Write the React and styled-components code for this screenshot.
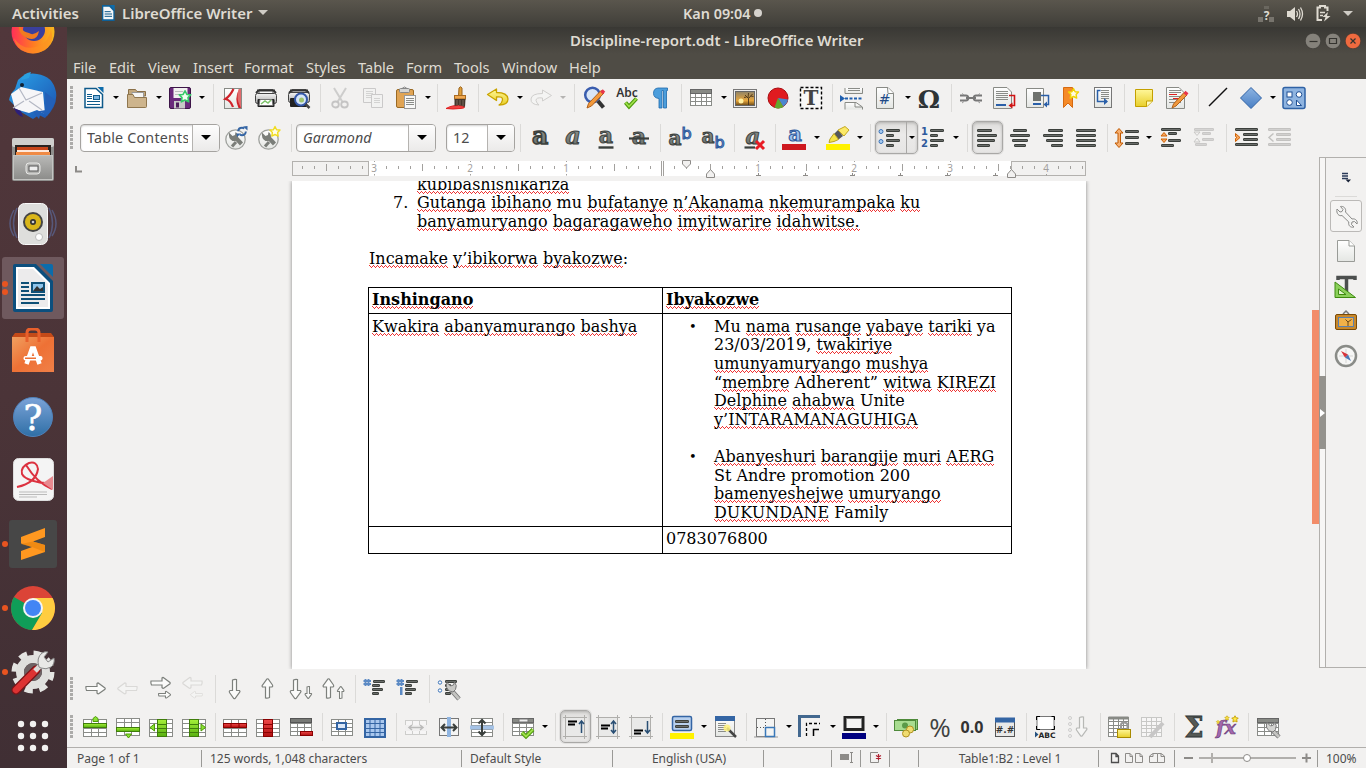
import React from "react";
import styled, { createGlobalStyle, css } from "styled-components";

const GlobalStyle = createGlobalStyle`
  * { box-sizing: border-box; }
  body { margin: 0; overflow: hidden; background: #f2f1f0; }
`;

const uiFont = `"Noto Sans", "Open Sans", sans-serif`;

/* ---------- shell ---------- */

const Screen = styled.div`
  width: 1366px;
  height: 768px;
  display: flex;
  flex-direction: column;
  overflow: hidden;
  font-family: ${uiFont};
  color: #4c4c4c;
`;

const TopBar = styled.header`
  height: 27px;
  flex: none;
  display: grid;
  grid-template-columns: 1fr auto 1fr;
  align-items: center;
  background: linear-gradient(#5a564d, #45433d 80%, #3f3e39);
  color: #dfdbd2;
  font-size: 15px;
  font-weight: 600;
`;

const TopLeft = styled.div`
  display: flex;
  align-items: center;
  padding: 0 0 2px 12px;
`;

const TopLabel = styled.span`
  width: ${(p) => p.$w}px;
  padding-left: ${(p) => p.$pl || 0}px;
  white-space: nowrap;
`;

const TopRight = styled.div`
  display: flex;
  align-items: center;
  justify-content: flex-end;
  gap: 12px;
  padding-right: 13px;
`;

const Clock = styled.div`
  display: flex;
  align-items: center;
  gap: 4px;
  padding: 0 0 1px 79px;
  width: 158px;
  font-size: 14.4px;
`;

const Dot = styled.i`
  width: 8px;
  height: 8px;
  border-radius: 50%;
  background: #d6d3ce;
`;

const Desktop = styled.div`
  flex: 1;
  min-height: 0;
  display: flex;
`;

const Dock = styled.nav`
  width: 67px;
  flex: none;
  overflow: hidden;
  background: linear-gradient(#51373b, #4b3438 50%, #402f34);
`;

const DockList = styled.div`
  margin-top: -27px;
  display: flex;
  flex-direction: column;
`;

const DockItem = styled.div`
  position: relative;
  height: 64px;
  display: flex;
  align-items: center;
  padding-left: 9px;
  ${(p) =>
    p.$active &&
    css`
      &::before {
        content: "";
        position: absolute;
        left: 2px;
        top: 1px;
        width: 62px;
        height: 62px;
        border-radius: 3px;
        background: #6f595e;
      }
    `}
  svg { position: relative; }
`;

const RunDots = styled.span`
  position: absolute;
  left: 2px;
  top: 50%;
  transform: translateY(-50%);
  display: flex;
  flex-direction: column;
  gap: 2px;
  i {
    width: 6px;
    height: 6px;
    border-radius: 50%;
    background: #e95420;
  }
`;

const Window = styled.main`
  flex: 1;
  min-width: 0;
  display: flex;
  flex-direction: column;
  background: #f2f1f0;
`;

const TitleBar = styled.div`
  height: 27px;
  flex: none;
  display: grid;
  grid-template-columns: 1fr auto 1fr;
  align-items: center;
  background: linear-gradient(#393834, #4f4c45);
  color: #dfdbd2;
  font-size: 15px;
  font-weight: 600;
  padding: 0 5px;
`;

const Title = styled.span`
  grid-column: 2;
  white-space: nowrap;
  width: 293px;
  padding-bottom: 2px;
`;

const WinButtons = styled.div`
  display: flex;
  justify-content: flex-end;
  gap: 4px;
`;

const MenuBar = styled.div`
  height: 25px;
  flex: none;
  display: flex;
  align-items: center;
  padding: 1px 0 0 6px;
  background: #4f4c45;
  color: #dfdbd2;
  font-size: 14.6px;
`;

const MenuItem = styled.span`
  width: ${(p) => p.$w}px;
  flex: none;
  white-space: nowrap;
`;

/* ---------- toolbars ---------- */

const ToolBar = styled.div`
  height: 39px;
  flex: none;
  display: flex;
  align-items: center;
  padding-left: 3px;
  padding-bottom: ${(p) => p.$pb || 0}px;
`;

const Handle = styled.i`
  width: 3px;
  height: 23px;
  flex: none;
  margin-right: ${(p) => p.$gap}px;
  background: repeating-linear-gradient(#acaba9 0 3px, transparent 3px 4px);
`;

const pressed = css`
  border: 1px solid #a9a8a6;
  border-radius: 5px;
  background: linear-gradient(#dddcda, #ebeae9 40%, #e6e5e4);
  box-shadow: inset 0 1px 3px rgba(0, 0, 0, 0.2), 0 0 0 1px #e2e1e0;
`;

const Tool = styled.span`
  width: 33px;
  height: 34px;
  flex: none;
  display: flex;
  align-items: center;
  padding-left: 4px;
  svg { display: block; overflow: visible; }
  ${(p) =>
    p.$on &&
    css`
      ${pressed}
      width: 31px;
      height: 33px;
      padding-left: 2px;
      margin: 0 1px;
    `}
`;

const Arrow = styled.span`
  width: ${(p) => (p.$wide ? 11 : 10)}px;
  height: 33px;
  flex: none;
  display: flex;
  align-items: center;
  justify-content: center;
  &::before {
    content: "";
    border: 3px solid transparent;
    border-top-color: ${(p) => (p.$off ? "#b5b4b2" : "#000")};
    border-bottom: 0;
  }
`;

const SplitPressed = styled.span`
  ${pressed}
  display: flex;
  align-items: center;
  width: 43px;
  height: 33px;
  flex: none;
  margin-left: 1px;
  ${Tool} {
    padding-left: 2px;
    width: 31px;
    height: 31px;
    border-right: 1px solid #a9a8a6;
  }
`;

const Sep = styled.i`
  width: 1px;
  height: 28px;
  flex: none;
  margin: 0 3px 0 ${(p) => 4 + (p.$x || 0)}px;
  background: #dbdad8;
`;

const Combo = styled.div`
  width: ${(p) => p.$w}px;
  height: 28px;
  flex: none;
  display: flex;
  margin-left: ${(p) => p.$ml || 0}px;
  border: 1px solid #a5a3a0;
  border-radius: 4px;
  overflow: hidden;
  background: #fff;
  box-shadow: inset 0 1px 2px rgba(0, 0, 0, 0.18);
  font-size: 14.3px;
`;

const ComboText = styled.span`
  flex: 1;
  min-width: 0;
  margin: 0 4px 0 6px;
  line-height: 26px;
  overflow: hidden;
  white-space: nowrap;
  font-style: ${(p) => (p.$italic ? "italic" : "normal")};
  letter-spacing: ${(p) => p.$ls || 0}px;
`;

const ComboButton = styled.span`
  width: 27px;
  border-left: 1px solid #b5b3b0;
  background: linear-gradient(#fdfdfd, #ebeae9);
  display: flex;
  align-items: center;
  justify-content: center;
  &::before {
    content: "";
    border: 5px solid transparent;
    border-top-color: #000;
    border-bottom: 0;
  }
`;

/* ---------- work area ---------- */

const WorkArea = styled.div`
  height: 512px;
  flex: none;
  display: flex;
`;

const EditColumn = styled.div`
  width: 1245px;
  flex: none;
  display: flex;
  flex-direction: column;
`;

const RulerRow = styled.div`
  height: 24px;
  flex: none;
  svg { display: block; }
`;

const Canvas = styled.div`
  flex: 1;
  min-height: 0;
  overflow: hidden;
  padding-left: 225px;
`;

const Page = styled.article`
  width: 794px;
  height: 488px;
  background: #fff;
  box-shadow: 0 0 4px rgba(0, 0, 0, 0.45);
  font-family: "DejaVu Serif", serif;
  font-size: 16px;
  line-height: 18.63px;
  color: #000;
  padding-left: 76px;
  overflow: hidden;
  clip-path: inset(0 -6px);
`;

const Line = styled.div`
  white-space: nowrap;
  padding-left: ${(p) => p.$indent || 0}px;
  margin-top: ${(p) => p.$mt || 0}px;
  min-height: 18.63px;
`;

const ListLine = styled(Line)`
  display: flex;
  padding-left: 25px;
`;

const Marker = styled.span`
  width: ${(p) => p.$w}px;
  flex: none;
`;

const Misspelt = styled.span`
  background-image: linear-gradient(90deg, #e33 1px, transparent 1px),
    linear-gradient(90deg, transparent 1px, #e33 1px),
    linear-gradient(90deg, transparent 2px, #e33 2px, #e33 3px, transparent 3px);
  background-size: 4px 1px, 2px 1px, 4px 1px;
  background-position: 0 16px, 0 17px, 0 18px;
  background-repeat: repeat-x;
`;

const Table = styled.div`
  display: grid;
  grid-template-columns: 294px 349px;
  grid-template-rows: 26px 213px 27px;
  width: 644px;
  margin-top: 18px;
  border-top: 1px solid #000;
  border-left: 1px solid #000;
`;

const Cell = styled.div`
  border-right: 1px solid #000;
  border-bottom: 1px solid #000;
  padding: ${(p) => p.$pt || 3}px 0 0 3px;
  font-weight: ${(p) => (p.$head ? "bold" : "normal")};
`;

const BulletList = styled.div`
  display: grid;
  grid-template-columns: 24px 1fr;
  padding-left: 24px;
  & + & { margin-top: 18.6px; }
`;

const Bullet = styled.span`
  font-size: 13px;
  margin-left: -1px;
`;

const ScrollGutter = styled.div`
  width: 7px;
  flex: none;
  padding-top: 153px;
`;

const ScrollThumb = styled.div`
  height: 214px;
  background: #f28c69;
`;

const Splitter = styled.div`
  width: 7px;
  height: 511px;
  flex: none;
  border: 1px solid #b2b0ad;
  padding-top: 218px;
  background: #f7f6f5;
`;

const Collapser = styled.div`
  width: 7px;
  height: 73px;
  margin-left: -1px;
  background: #94928d;
  display: flex;
  align-items: center;
  justify-content: center;
  &::before {
    content: "";
    border: 4px solid transparent;
    border-left: 5px solid #fff;
    border-right: 0;
  }
`;

const SideBar = styled.aside`
  flex: 1;
  height: 511px;
  border-top: 1px solid #b2b0ad;
  border-bottom: 1px solid #b2b0ad;
  display: flex;
  flex-direction: column;
  align-items: center;
  padding-top: 8px;
  svg { display: block; overflow: visible; }
`;

const SideRule = styled.i`
  width: 22px;
  height: 1px;
  margin: 6px 0 3px;
  background: #dbdad8;
`;

const SideItem = styled.div`
  width: 32px;
  height: ${(p) => p.$h || 35}px;
  display: flex;
  align-items: center;
  justify-content: center;
  ${(p) =>
    p.$on &&
    css`
      border: 1px solid #bbb9b7;
      border-radius: 3px;
      background: #f5f4f3;
    `}
`;

/* ---------- status bar ---------- */

const StatusBar = styled.footer`
  height: 21px;
  flex: none;
  display: flex;
  align-items: center;
  border-top: 1px solid #b1afac;
  font-size: 12px;
  margin-top: auto;
`;

const Status = styled.span`
  width: ${(p) => p.$w}px;
  height: 17px;
  flex: none;
  display: flex;
  align-items: center;
  justify-content: ${(p) => (p.$center ? "center" : "flex-start")};
  padding-left: ${(p) => p.$pl || 0}px;
  border-right: ${(p) => (p.$last ? "0" : "1px solid #9a9996")};
  white-space: nowrap;
`;

/* ---------- icon helpers ---------- */

const Icon = ({ children, size = 24, box = 24 }) => (
  <svg width={size} height={size} viewBox={`0 0 ${box} ${box}`} fill="none">
    {children}
  </svg>
);
const P = ({ d, s = "#444", w = 1, f = "none", ...r }) => (
  <path d={d} stroke={s} strokeWidth={w} fill={f} {...r} />
);
const R = ({ x, y, w, h, f = "none", s = "none", ...r }) => (
  <rect x={x} y={y} width={w} height={h} fill={f} stroke={s} {...r} />
);
const T = ({ x = 12, y = 18, size = 20, f = "#4c4f4c", family = "DejaVu Serif", children, ...r }) => (
  <text x={x} y={y} fontSize={size} fill={f} fontFamily={family} textAnchor="middle" {...r}>
    {children}
  </text>
);

const HiddenSvg = styled.svg`
  position: absolute;
`;

const Defs = () => (
  <HiddenSvg width="0" height="0">
    <defs>
      <linearGradient id="paper" x2="0" y2="1">
        <stop stopColor="#fff" /><stop offset="1" stopColor="#e4e6e3" />
      </linearGradient>
      <linearGradient id="steel" x2="0" y2="1">
        <stop stopColor="#f4f4f4" /><stop offset="1" stopColor="#a9a9a9" />
      </linearGradient>
      <linearGradient id="cabinet" x2="0" y2="1">
        <stop stopColor="#b9b9b7" /><stop offset="1" stopColor="#8c8c8a" />
      </linearGradient>
      <linearGradient id="letter" x2="0" y2="1">
        <stop stopColor="#9a9f9a" /><stop offset="1" stopColor="#646a66" />
      </linearGradient>
      <linearGradient id="blue" x2="0" y2="1">
        <stop stopColor="#8db4e2" /><stop offset="1" stopColor="#4a7fc4" />
      </linearGradient>
      <linearGradient id="gold" x2="0" y2="1">
        <stop stopColor="#fff79a" /><stop offset="1" stopColor="#e8cf2a" />
      </linearGradient>
      <linearGradient id="help" x2="0" y2="1">
        <stop stopColor="#7ba3d8" /><stop offset="1" stopColor="#2f6fa6" />
      </linearGradient>
      <linearGradient id="bag" x2="1" y2="1">
        <stop stopColor="#f0a060" /><stop offset=".5" stopColor="#ee7135" /><stop offset="1" stopColor="#f08048" />
      </linearGradient>
      <linearGradient id="fox" x2="1" y2="0">
        <stop stopColor="#ff2f58" /><stop offset=".5" stopColor="#ff7a22" /><stop offset="1" stopColor="#f8b81e" />
      </linearGradient>
      <linearGradient id="bird" x2="1" y2="1">
        <stop stopColor="#2aa3e8" /><stop offset="1" stopColor="#1b4fae" />
      </linearGradient>
      <linearGradient id="sunset" x2="0" y2="1">
        <stop stopColor="#8f8468" /><stop offset=".65" stopColor="#e8a63c" /><stop offset="1" stopColor="#6a4a18" />
      </linearGradient>
      <linearGradient id="redr" x2="0" y2="1">
        <stop stopColor="#ef4848" /><stop offset="1" stopColor="#b01010" />
      </linearGradient>
      <linearGradient id="greenr" x2="0" y2="1">
        <stop stopColor="#a6f03a" /><stop offset="1" stopColor="#58b010" />
      </linearGradient>
    </defs>
  </HiddenSvg>
);

const Bars = ({ rows, s = "#3c403c" }) =>
  rows.map(([x1, x2, y], i) => (
    <g key={i}>
      <R x={x1} y={y} w={x2 - x1} h={3} f={s} rx="1.2" />
      <R x={x1 + 1} y={y + 1} w={Math.max(1, x2 - x1 - 2)} h={0.8} f="#fff" opacity=".3" />
    </g>
  ));

const Grid = ({ x = 0.5, y = 4.5, w = 23, h = 17, cols = 3, rows = 4, s = "#8a8c88", f = "#fff" }) => {
  const lines = [];
  for (let i = 1; i < cols; i++) lines.push(`M${x + Math.round((w * i) / cols)} ${y}v${h}`);
  for (let i = 1; i < rows; i++) lines.push(`M${x} ${y + Math.round((h * i) / rows)}h${w}`);
  return (
    <g>
      <R x={x} y={y} w={w} h={h} f={f} s={s} />
      <P d={lines.join("")} s={s} />
    </g>
  );
};

const Star = ({ x, y, c = "#f4d800", f = "#fff8b0", k = 1 }) => (
  <path
    transform={`translate(${x} ${y}) scale(${k})`}
    d="M0-5L1.6-1.8L5-1.5L2.6 1L3.2 4.6L0 3L-3.2 4.6L-2.6 1L-5-1.5L-1.6-1.8Z"
    fill={f}
    stroke={c}
    strokeWidth="1.4"
    strokeLinejoin="round"
  />
);

const Wrench = ({ s = "#777", f = "#e8e8e6", t }) => (
  <path
    transform={t}
    d="M2 4L5 7L7 6.500L8 4.500L5.500 1.500C8.500 .8 11.500 3.500 10.500 7L17 14C20.500 13.200 23 16 22 19L19.500 16.500L17 17L16.500 19.500L19 22C15.500 23 13 20.500 13.800 17L7 10.500C4 11.500 1 8.500 2 4Z"
    fill={f}
    stroke={s}
    strokeLinejoin="round"
  />
);

/* Wrench on the style buttons: jaws at the upper left, handle running to the lower right */
const StyleWrench = () => (
  <g>
    <P d="M11.500 11.500L17.500 18" s="#7b7e79" w={4.200} />
    <path d="M5 6.500L8.500 10L11 9L11.500 6Q15 8.500 13.500 12.500L11.500 15L8.500 15Q4 12.500 5 6.500Z" fill="#7b7e79" />
    <P d="M12 16L8 20.500" s="#7b7e79" w={3} />
  </g>
);

const Lines = ({ y = [8, 10, 12, 14, 16, 18], x = 6, w = 11, s = "#8a8c88" }) => (
  <P d={y.map((v) => `M${x} ${v + 0.5}h${w}`).join("")} s={s} />
);

const Doc = ({ f = "url(#paper)", s = "#888a85" }) => (
  <g>
    <P d="M3.500 1.500H15L20.500 7V22.500H3.500Z" s={s} f={f} />
    <P d="M14.500 1.500L15 7.500H20.500" s={s} f="#fff" />
  </g>
);

const Letter = ({ size = 22, children = "a", ...r }) => (
  <T size={size} fontWeight="bold" f="url(#letter)" stroke="#3c413e" strokeWidth="1" {...r}>{children}</T>
);

/* ---------- toolbar icons ---------- */

const WriterGlyph = () => (
  <g>
    <P d="M3 2.500H14L20.500 8.500V21.500H3Z" s="#0e5a8a" w={1.500} f="#fff" />
    <path d="M15.500 1H21.500V7Z" fill="#0e6cab" />
    <Lines y={[8, 10]} x={5} w={5} s="#0e5a8a" />
    <R x={11.500} y={9.500} w={6} h={4} f="#7ab4e0" s="#0e5a8a" />
    <Lines y={[12]} x={5} w={5} s="#0e5a8a" />
    <Lines y={[15, 18]} x={5} w={13} s="#0e5a8a" />
  </g>
);

const SmallWriterGlyph = () => (
  <g>
    <path d="M3 0H16L22 6V24H3Z" fill="#0e6098" />
    <path d="M5 2.500H14L20 9V21.500H5Z" fill="#f4f6f8" />
    <path d="M15 0H22V8Z" fill="#0e6cab" />
    <P d="M7 10H16M7 13.500H18M7 17H18" s="#0e5a8a" w={1.500} />
  </g>
);

const arrowRight = "M1 10.500H12V7.500Q13 6.500 14 7.500L20 12Q20.500 12.500 20 13.200L14 17.500Q13 18.200 12 17V14.500H1.500Q.5 12.500 1 10.500Z";
const BigArrow = ({ t, off, s }) => (
  <path
    transform={t}
    d={arrowRight}
    fill={off ? "#f4f4f3" : "#fbfbfa"}
    stroke={off ? "#dad9d7" : "#7d807c"}
    strokeWidth={s || 1.2}
  />
);

const I = {
  newDoc: <WriterGlyph />,
  open: (
    <g>
      <P d="M3.500 5V3.500H10.500L12 5.500H20.500V10H3.500Z" s="#8a7048" f="#c2a87e" />
      <P d="M7 6.500H18.500V12H7Z" s="#999" f="#f6f6f4" />
      <P d="M2.500 21.500V8.500H8L9.500 11.500H21.500V20.500Q21.500 21.500 20.500 21.500Z" s="#8f764e" f="#cdb48c" />
    </g>
  ),
  save: (
    <g>
      <R x={1.500} y={1.500} w={21} h={21} rx="1.500" f="#6a2a7c" s="#3d1548" />
      <R x={5.500} y={2} w={14} h={10} f="#f1f1ef" />
      <Lines y={[5, 8]} x={7} w={8} s="#bbb" />
      <R x={6} y={15} w={11} h={7.500} f="#c8c8c8" />
      <R x={8} y={16.500} w={3} h={5} f="#4d1c5c" />
      <Star x={17} y={10.500} c="#37c86a" f="#f2fff2" k={1.150} />
    </g>
  ),
  pdf: (
    <g>
      <R x={3.500} y={2.500} w={17} h={20} f="url(#paper)" s="#888a85" />
      <P d="M12.500 3Q9 10 4.500 13Q9.500 14 12 21" s="#d0222a" w={2.200} />
      <path d="M15 3H20V22H17.500Q13 13 18 3Z" fill="#d0222a" />
      <path d="M17.500 3H20V22Q14.500 13 17.500 3Z" fill="#e88a8a" opacity=".7" />
    </g>
  ),
  print: (
    <g>
      <P d="M5 3.500H19V9H5Z" s="#555" f="#fafafa" />
      <R x={1.500} y={7.500} w={21} h={10} rx="2" f="url(#steel)" s="#444" />
      <P d="M2 7L5 4M22 7L19 4M3 4.500H21" s="#333" w={2} />
      <R x={3.500} y={13} w={17} h={8} rx="1" f="#222" />
      <P d="M6 13.500H18L19 19.500H5Z" s="#777" f="#fff" />
      <P d="M7 18L11 15L14 17L17 14" s="#7dc36a" w={1.500} />
    </g>
  ),
  preview: (
    <g>
      <P d="M5 3.500H19V9H5Z" s="#555" f="#fafafa" />
      <R x={1.500} y={6.500} w={21} h={10} rx="2" f="url(#steel)" s="#444" />
      <P d="M2 7L5 4M22 7L19 4M3 4.500H21" s="#333" w={2} />
      <R x={3} y={12} w={17} h={9} rx="1" f="#222" />
      <circle cx="14" cy="13.500" r="6" fill="#d6e6f8" stroke="#3558a8" strokeWidth="2" />
      <circle cx="14.500" cy="14" r="2.500" fill="#9fc46e" />
      <P d="M18.500 18L22.500 22" s="#444" w={2.500} />
    </g>
  ),
  cut: (
    <g opacity=".5">
      <P d="M6 2L14.500 16M18 2L9.500 16" s="#aaa" w={2} />
      <ellipse cx="7.500" cy="18.500" rx="3.300" ry="3" stroke="#999" strokeWidth="1.800" />
      <ellipse cx="16.500" cy="18.500" rx="3.300" ry="3" stroke="#999" strokeWidth="1.800" />
    </g>
  ),
  copy: (
    <g opacity=".55">
      <P d="M2.500 2.500H14.500V16.500H2.500Z" s="#aaa" f="#f3f3f2" />
      <Lines y={[5, 7, 9, 11]} x={5} w={7} s="#bbb" />
      <P d="M10.500 8.500H21.500V21.500H10.500Z" s="#aaa" f="#f3f3f2" />
      <Lines y={[12, 14, 16]} x={13} w={6} s="#bbb" />
    </g>
  ),
  paste: (
    <g>
      <R x={2.500} y={3.500} w={17} h={18} rx="1.500" f="#e0a454" s="#9a6a24" />
      <R x={5.500} y={2.500} w={10} h={4} rx="1" f="#d6d6d4" s="#888" />
      <P d="M8 2.500Q10.500 -.5 13 2.500" s="#888" />
      <R x={10.500} y={9.500} w={11} h={13} f="#f8f8f7" s="#999" />
      <Lines y={[12, 14, 16, 18]} x={12} w={8} />
    </g>
  ),
  brush: (
    <g>
      <P d="M1 22.500Q9 18 18 20Q22 22 15 22.500Q8 23.500 1 22.500Z" s="#e02020" f="#f04040" />
      <path d="M14 2Q15.500 -.5 17 2L17 10H13.500Z" fill="#e2a03a" stroke="#9a6520" />
      <R x={9.500} y={9.500} w={11} h={3.500} f="#f0a850" s="#a86a20" />
      <path d="M9.500 13H20.500L20 21Q14 18 9.500 20Z" fill="#45362c" />
      <P d="M12 14V19M15 14V19M18 14V20" s="#7c6a5c" />
    </g>
  ),
  undo: <P d="M10.500 3L1.500 8.500L10.500 14.500V11Q17 10 16.500 14Q16 17 13 19Q22 19 22 13Q21.500 6.500 10.500 6.500Z" s="#c9a400" w={1.300} f="url(#gold)" strokeLinejoin="round" />,
  redo: <P d="M13.500 4L22.500 9.500L13.500 15V12Q7 11 7 14.500Q7.500 17 10 19Q1.500 18.500 2 13Q2.500 7.500 13.500 7.500Z" s="#d0cfcd" f="#f4f4f3" strokeLinejoin="round" />,
  find: (
    <g>
      <circle cx="10.500" cy="9" r="7.300" fill="#d9e6f6" stroke="#3a5dae" strokeWidth="2.500" />
      <P d="M16 15L21.500 21.500" s="#333" w={4} />
      <P d="M5 22L6.500 17.500L19 4.500L22 7L9.500 20Z" s="#b0601a" f="#f39a3c" />
      <P d="M19.500 4.500L22 7" s="#e8344c" w={3.500} />
    </g>
  ),
  abc: (
    <g>
      <T y={10.500} size={12} f="#333" family="Noto Sans" fontWeight="600">Abc</T>
      <P d="M10.500 16.500L14 20.500L21.500 12.500" s="#4d9a0c" w={4} />
      <P d="M10.500 16.500L14 20.500L21.500 12.500" s="#9fe04a" w={1.800} />
    </g>
  ),
  pilcrow: (
    <path d="M10 2H19.500V4.500H18.500V22H15.500V4.500H14V22H11V12.500Q5.500 12 5.500 7.300Q5.500 2.500 10 2Z" fill="#4c9edc" stroke="#1e6aac" strokeWidth=".8" />
  ),
  table: (
    <g>
      <Grid x={1.500} y={3.500} w={21} h={16} cols={4} rows={4} />
      <R x={1.500} y={3.500} w={21} h={4} f="#888a85" s="#666" />
    </g>
  ),
  image: (
    <g>
      <R x={0.500} y={3.500} w={23} h={18} f="#eee" s="#777" />
      <R x={2.500} y={5.500} w={19} h={14} f="url(#sunset)" s="#666" />
      <circle cx="8" cy="15" r="2.500" fill="#fff0a0" />
      <P d="M15.500 19V12.500L12 9M15.500 12.500L19.500 8M13.500 11L11 11.500M17.500 10L20.500 10.500M15 12L15.500 7" s="#4a3418" w={0.900} />
    </g>
  ),
  chart: (
    <g>
      <circle cx="12" cy="12" r="10" fill="#e01b20" stroke="#a80c10" />
      <path d="M12 12L22 13.500A10 10 0 0 1 17 20.500Z" fill="#4a86cf" />
      <path d="M12 12L17.500 21A10 10 0 0 1 8.500 21.500Z" fill="#63a82e" />
    </g>
  ),
  textbox: (
    <g>
      <R x={1.500} y={1.500} w={21} h={21} f="#f8f8f7" s="#000" strokeWidth="1.400" strokeDasharray="3 2" />
      <T y={19} size={20} fontWeight="bold" f="#444">T</T>
    </g>
  ),
  pageBreak: (
    <g>
      <P d="M5 2V7.500H22.500V2" s="#888a85" f="url(#paper)" />
      <Lines y={[2, 4]} x={8} w={12} />
      <P d="M5 23.500V16.500H16L22.500 21V23.500" s="#888a85" f="url(#paper)" />
      <P d="M15 17V21H22" s="#888a85" />
      <P d="M5 12.500H23" s="#1f5fae" w={2} strokeDasharray="3 1.500" />
      <path d="M0 9L5 12.500L0 16Z" fill="#1f5fae" />
    </g>
  ),
  field: (
    <g>
      <Doc />
      <T x={11.500} y={18} size={14} f="#204a87" family="DejaVu Sans">#</T>
    </g>
  ),
  omega: <T y={21.500} x={12} size={25} f="#2e3436" fontWeight="bold">Ω</T>,
  link: (
    <g>
      <P d="M1 9.500H7Q9 9.500 9.500 12Q9 14.500 7 14.500H1M23 9.500H17Q15 9.500 14.500 12Q15 14.500 17 14.500H23" s="#777" w={1.800} />
      <P d="M7 12H17" s="#777" w={2} />
      <P d="M3 7.500L5 9M21 7.500L19 9M3 17L5 15.500M21 17L19 15.500" s="#999" />
    </g>
  ),
  footnote: (
    <g>
      <P d="M1.500 1.500H15L19.500 6V22.500H1.500Z" s="#888a85" f="url(#paper)" />
      <Lines y={[5, 7, 9, 11, 13]} x={4} w={12} />
      <Lines y={[18, 19]} x={4} w={10} s="#2a5fa8" />
      <P d="M17 9.500H22.500V19.500H18" s="#d01414" w={1.600} />
      <path d="M20.500 16.500L16.500 19.500L20.500 22.500Z" fill="#d01414" />
    </g>
  ),
  endnote: (
    <g>
      <P d="M1.500 2.500H18.500V21.500H1.500Z" s="#888a85" f="url(#paper)" />
      <R x={8} y={6} w={8} h={9} f="#6f726e" />
      <R x={8} y={17} w={8} h={2} f="#2a5fa8" />
      <P d="M16 9.500H23.500V18.500H20" s="#2a5fa8" w={1.500} />
      <path d="M22 15.500L18.500 18.500L22 21.500Z" fill="#2a5fa8" />
    </g>
  ),
  bookmark: (
    <g>
      <P d="M5.500 1.500H14.500V21.500L10 17L5.500 21.500Z" s="#d66a10" f="#f58a28" />
      <Star x={15.500} y={7.500} c="#f2d400" f="#fffbe0" />
    </g>
  ),
  crossRef: (
    <g>
      <R x={3.500} y={1.500} w={17} h={20} f="url(#paper)" s="#777" />
      <Lines y={[4, 6, 8, 10, 12]} x={10} w={8} />
      <P d="M9.500 4.500H6.500V15.500H16" s="#2a5fa8" w={1.500} />
      <path d="M13 12L17 15.500L13 19Z" fill="#2a5fa8" />
    </g>
  ),
  comment: (
    <g>
      <P d="M3.500 3.500H20.500V15L15 20.500H3.500Z" s="#c4a000" f="url(#gold)" />
      <P d="M14.500 20.500V15H20.500" s="#c4a000" f="#fffbc0" />
    </g>
  ),
  track: (
    <g>
      <P d="M1.500 1.500H14L19.500 7V22.500H1.500Z" s="#888a85" f="url(#paper)" />
      <Lines y={[4, 6, 10, 13, 16]} x={4} w={12} />
      <P d="M4 8.500H12M8 12.500H15" s="#e02020" />
      <P d="M7 22L8.500 18L19 6.500L22 9L11 20Z" s="#b0601a" f="#f0983c" />
      <P d="M19.500 6L22.500 8.500" s="#e8344c" w={3} />
    </g>
  ),
  line: <P d="M3 20L21 2" s="#111" w={1.400} />,
  diamond: <P d="M12 1.500L22.500 12L12 22.500L1.500 12Z" s="#2f62a5" f="url(#blue)" strokeLinejoin="round" />,
  drawFn: (
    <g>
      <R x={1} y={1.500} w={22} h={21} rx="2" f="#8fb4e0" s="#2f62a5" strokeWidth="1.500" />
      <R x={5} y={6} w={5} h={5} s="#1f4f94" f="#fff" />
      <circle cx="17" cy="8.500" r="2.800" fill="#fff" stroke="#1f4f94" />
      <circle cx="7.500" cy="16.500" r="2.800" fill="#fff" stroke="#1f4f94" />
      <P d="M14.500 14L19.500 19.500H14.500Z" s="#1f4f94" f="#fff" />
    </g>
  ),
  styleUpdate: (
    <g>
      <circle cx="11.500" cy="13.500" r="9.700" fill="url(#paper)" stroke="#9fa19d" strokeWidth="1.300" />
      <StyleWrench />
      <circle cx="18" cy="5.500" r="3.800" stroke="#3465a4" strokeWidth="2" strokeDasharray="8 3.900" />
      <path d="M19 .5L23.500 0V4.500ZM12.500 7.500H17L13 11Z" fill="#3465a4" />
    </g>
  ),
  styleNew: (
    <g>
      <circle cx="11.500" cy="13.500" r="9.700" fill="url(#paper)" stroke="#9fa19d" strokeWidth="1.300" />
      <StyleWrench />
      <Star x={18} y={5.500} c="#f0dc20" f="#fffde8" />
    </g>
  ),
  bold: <Letter y={18} size={25} strokeWidth="1.600" />,
  italic: <Letter y={18} size={24} fontStyle="italic" />,
  underline: (
    <g>
      <Letter y={16.500} size={22} />
      <P d="M4.500 21.500H19.500" s="#3a3f3c" w={2.400} />
    </g>
  ),
  strike: (
    <g>
      <Letter y={18} size={22} />
      <P d="M2 12.500H22" s="#3a3f3c" w={2.200} />
    </g>
  ),
  sup: (
    <g>
      <Letter x={7} y={19} size={20} />
      <T x={18.500} y={13} size={16} family="DejaVu Sans" f="#9cc0ec" stroke="#2f5a9c" strokeWidth="1.100">b</T>
    </g>
  ),
  sub: (
    <g>
      <Letter x={7} y={16.500} size={20} />
      <T x={18.500} y={21.500} size={16} family="DejaVu Sans" f="#9cc0ec" stroke="#2f5a9c" strokeWidth="1.100">b</T>
    </g>
  ),
  clear: (
    <g>
      <Letter x={11} y={17.500} size={23} fontStyle="italic" />
      <P d="M2.500 21.500H13" s="#3a3f3c" w={2.200} />
      <P d="M14 15L22 23M22 15L14 23" s="#e81c24" w={3} />
    </g>
  ),
  fontColor: (
    <g>
      <T y={14.500} size={21} fontWeight="bold" f="#9cc0ec" stroke="#2f5a9c" strokeWidth="1.100">a</T>
      <R x={-1} y={18} w={24} h={6} f="#ce181e" />
    </g>
  ),
  highlight: (
    <g>
      <path d="M8 8L12 4L17 10L12.500 13.500Z" fill="#55585a" />
      <path d="M12 4L19 .5L23 4L18 10Z" fill="#fbe968" stroke="#c4a820" />
      <path d="M8 7.500L4 13L3 16.500L8 15.500L12.500 13.500Z" fill="#f5e34a" stroke="#b8a020" />
      <R x={0} y={18} w={24} h={6} f="#fff200" />
    </g>
  ),
  bullets: (
    <g>
      <circle cx="3" cy="5.500" r="2" fill="#a9cbee" stroke="#3a73b8" />
      <circle cx="3" cy="15.500" r="2" fill="#a9cbee" stroke="#3a73b8" />
      <Bars rows={[[8, 22, 3], [8, 16, 8], [8, 22, 13], [8, 16, 18]]} />
    </g>
  ),
  numbers: (
    <g>
      <T x={2.500} y={9} size={10} fontWeight="bold" f="#2f5a9c" family="DejaVu Sans">1</T>
      <T x={2.500} y={20.500} size={10} fontWeight="bold" f="#2f5a9c" family="DejaVu Sans">2</T>
      <Bars rows={[[8, 22, 3], [8, 16, 8], [8, 22, 13], [8, 16, 18]]} />
    </g>
  ),
  left: <Bars rows={[[2, 17, 3], [2, 22, 8], [2, 20, 13], [2, 15, 18]]} />,
  center: <Bars rows={[[5, 19, 3], [2, 22, 8], [4, 20, 13], [6, 18, 18]]} />,
  right: <Bars rows={[[7, 22, 3], [2, 22, 8], [5, 22, 13], [10, 22, 18]]} />,
  justify: <Bars rows={[[2, 22, 3], [2, 22, 8], [2, 22, 13], [2, 22, 18]]} />,
  spacing: (
    <g>
      <P d="M3 7H0L4 2.500L8 7H5.500V17H8L4 21.500L0 17H3Z" s="#c05800" f="#f8b070" />
      <Bars rows={[[10, 24, 4], [10, 24, 10], [10, 24, 16]]} />
    </g>
  ),
  paraInc: (
    <g>
      <Bars rows={[[3, 23, 2], [10, 19, 6], [10, 23, 13], [3, 16, 18]]} />
      <P d="M3 10L6 6.500L9 10ZM3 13L6 16.500L9 13Z" s="#d06000" f="#f8a860" />
    </g>
  ),
  paraDec: (
    <g opacity=".85">
      <Bars s="#c3c2c0" rows={[[3, 23, 2], [11, 20, 6], [11, 23, 12], [4, 16, 17]]} />
      <P d="M3 6L6 9.500L9 6ZM3 16L6 12L9 16Z" s="#c3c2c0" />
    </g>
  ),
  indent: (
    <g>
      <Bars rows={[[1, 24, 2], [9, 24, 7], [9, 24, 12], [1, 24, 17]]} />
      <P d="M1.500 7.500L6 11.500L1.500 15.500V12.500L3 11.500L1.500 10.500Z" s="#d06000" f="#f8a860" />
    </g>
  ),
  outdent: (
    <g>
      <Bars s="#c3c2c0" rows={[[1, 24, 2], [9, 24, 7], [9, 24, 12], [1, 24, 17]]} />
      <P d="M6.500 7.500L2 11.500L6.500 15.500" s="#c3c2c0" w={1.500} />
    </g>
  ),
  promote: <BigArrow t="translate(2 -1)" />,
  demote: <BigArrow t="translate(22 -1) scale(-1 1)" off />,
  promoteSub: (
    <g><BigArrow t="translate(1 -6.500)" /><BigArrow t="translate(9 10) scale(.62)" s={1.700} /></g>
  ),
  demoteSub: (
    <g><BigArrow t="translate(21 -6.500) scale(-1 1)" off /><BigArrow t="translate(21 10) scale(-.62 .62)" off /></g>
  ),
  down: <BigArrow t="translate(24 1.500) rotate(90)" />,
  up: <BigArrow t="translate(-1 22) rotate(-90)" />,
  downSub: (
    <g><BigArrow t="translate(19 1.500) rotate(90)" /><BigArrow t="translate(27 9) rotate(90) scale(.62)" s={1.700} /></g>
  ),
  upSub: (
    <g><BigArrow t="translate(-6 22) rotate(-90)" /><BigArrow t="translate(11 22) rotate(-90) scale(.62)" s={1.700} /></g>
  ),
  hashList: (
    <g>
      <P d="M2.500 2V9M5.500 2V9M.5 4H8M.5 7H8" s="#5c8ac4" w={1.900} />
      <Bars rows={[[10, 22, 3], [9, 17, 7], [9, 20, 11], [9, 16, 15]]} />
    </g>
  ),
  hashInsert: (
    <g>
      <P d="M2.500 2V9M5.500 2V9M.5 4H8M.5 7H8" s="#5c8ac4" w={1.900} />
      <R x={4} y={10} w={2.500} h={8} f="#5c8ac4" />
      <Bars rows={[[10, 22, 3], [9, 16, 7], [9, 20, 11], [9, 16, 15]]} />
    </g>
  ),
  bulletDlg: (
    <g>
      <circle cx="3" cy="5.500" r="1.700" fill="#fff" stroke="#3a73b8" />
      <circle cx="3" cy="13.500" r="1.700" fill="#fff" stroke="#3a73b8" />
      <Bars rows={[[8, 20, 3], [8, 14, 7], [8, 16, 11], [8, 14, 15]]} />
      <P d="M15 14L22 22" s="#777" w={4.500} />
      <P d="M15 14L22 22" s="#c4c4c1" w={2.800} />
      <path d="M10 5.500L13.500 9L16.500 8L17.500 5Q20.500 8.500 18.500 12.500L16 15L12.500 14Q8 11 10 5.500Z" fill="#c8c8c5" stroke="#777" />
    </g>
  ),
  rowAbove: (
    <g><Grid /><R x={0.500} y={8.500} w={23} h={4} f="url(#greenr)" s="#3f7d0a" /><P d="M10 6.500V3.500L12.500 1.500L15 3.500V6.500Z" s="#4e9a06" f="#8ae234" /></g>
  ),
  rowBelow: (
    <g><Grid y={3.500} /><R x={0.500} y={12.500} w={23} h={4} f="url(#greenr)" s="#3f7d0a" /><P d="M9.500 19H15.500L12.500 23Z" s="#4e9a06" f="#8ae234" /></g>
  ),
  colBefore: (
    <g><Grid /><R x={8.500} y={4.500} w={9} h={17} f="url(#greenr)" s="#3f7d0a" /><P d="M8.500 9.500H17M8.500 13.500H17M8.500 17.500H17" s="#3f7d0a" /><P d="M5.500 9V16L1 12.500Z" s="#4e9a06" f="#8ae234" /></g>
  ),
  colAfter: (
    <g><Grid /><R x={7.500} y={4.500} w={9} h={17} f="url(#greenr)" s="#3f7d0a" /><P d="M7.500 9.500H16M7.500 13.500H16M7.500 17.500H16" s="#3f7d0a" /><P d="M19 9V16L23.500 12.500Z" s="#4e9a06" f="#8ae234" /></g>
  ),
  rowDel: (
    <g><Grid /><R x={0.500} y={8.500} w={23} h={4} f="url(#redr)" s="#8a0000" /><P d="M8 8.500V12.500M16 8.500V12.500" s="#8a0000" /></g>
  ),
  colDel: (
    <g><Grid /><R x={7.500} y={4.500} w={9} h={17} f="url(#redr)" s="#8a0000" /><P d="M7.500 9.500H16M7.500 13.500H16M7.500 17.500H16" s="#8a0000" /></g>
  ),
  tableDel: (
    <g><Grid x={1.500} y={4.500} w={21} h={16} /><R x={1.500} y={3.500} w={21} h={4} f="#777975" s="#555" /><R x={11.500} y={16.500} w={12} h={4} f="url(#redr)" s="#8a0000" /></g>
  ),
  cellSel: (
    <g><Grid x={1.500} w={21} h={16} /><R x={7} y={8} w={9} h={6} f="#dce8f8" s="#3465a4" strokeWidth="2" /></g>
  ),
  tableSel: <g><Grid x={2} y={4.500} w={20} h={17} cols={4} s="#3465a4" f="#aac8ee" /><R x={2} y={4} w={20} h={18} s="#3465a4" strokeWidth="2" /></g>,
  merge: (
    <g opacity=".35"><Grid y={5.500} x={1.500} w={21} h={14} rows={3} /><R x={1} y={10} w={22} h={6} f="#eee" /><P d="M5 12.500H19M8 10L5 12.500L8 15M16 10L19 12.500L16 15" s="#555" w={1.500} /></g>
  ),
  splitCol: (
    <g><R x={2.500} y={3.500} w={19} h={17} f="#f4f4f3" s="#777" /><R x={10} y={2} w={4} h={20} f="#8fb4e0" /><P d="M4 12.500H20M8 9L4.500 12.500L8 16M16 9L19.500 12.500L16 16" s="#3a3f3c" w={2} /></g>
  ),
  splitRow: (
    <g><Grid x={1.500} y={3.500} w={21} h={18} cols={2} rows={5} /><R x={0} y={10.500} w={24} h={4} f="#a4c2e6" /><P d="M12 5V20M8.500 8.500L12 5L15.500 8.500M8.500 16.500L12 20L15.500 16.500" s="#3a3f3c" w={2} /></g>
  ),
  optimize: (
    <g><Grid x={1.500} y={4.500} w={21} h={16} /><R x={1.500} y={3.500} w={21} h={4} f="#888a85" s="#666" /><R x={8} y={4} w={9} h={3} f="#eee" s="#777" /><P d="M11 17.500L15 21.500L22 14.500" s="#4d9a0c" w={4} /><P d="M11 17.500L15 21.500L22 14.500" s="#9fe04a" w={1.800} /></g>
  ),
  frame: (kind) => (
    <g>
      <R x={2.500} y={2.500} w={19} h={19} f="#e9e9e8" />
      <P d="M2.500 0V24M21.500 0V24M0 2.500H24M0 21.500H24" s="#b0afac" />
      {kind === "top" && <g><P d="M5 6.500H14M5 9.500H12" s="#000" w={2} /><P d="M18.500 6V18M16 9L18.500 6L21 9" s="#2a4f74" w={1.500} /></g>}
      {kind === "mid" && <g><P d="M5 10.500H14M5 13.500H12" s="#000" w={2} /><P d="M17.500 6V18M15 9L17.500 6L20 9M15 15L17.500 18L20 15" s="#2a4f74" w={1.500} /></g>}
      {kind === "bot" && <g><P d="M5 15.500H14M5 18.500H12" s="#000" w={2} /><P d="M18.500 6V18M16 15L18.500 18L21 15" s="#2a4f74" w={1.500} /></g>}
    </g>
  ),
  fill: (
    <g><R x={2.500} y={1.500} w={19} h={14} rx="1.500" f="#b8d0ee" s="#3465a4" strokeWidth="1.500" /><Bars rows={[[5, 19, 5], [5, 19, 10]]} /><R x={0} y={18} w={24} h={6} f="#fff200" /></g>
  ),
  autoFmt: (
    <g><R x={2.500} y={1.500} w={19} h={20} f="url(#paper)" s="#888" /><R x={2} y={1} w={20} h={5} f="#3465a4" /><Lines y={[8, 10, 12, 14, 16]} x={5} w={8} /><P d="M14 13L23 22" s="#444" w={2.500} /><circle cx="14" cy="13" r="3.500" fill="#fff27a" opacity=".85" /></g>
  ),
  borders: (
    <g><R x={2.500} y={3.500} w={18} h={18} f="#f4f4f3" s="#777" /><P d="M0 22H24" s="#999" /><P d="M11.500 4V21M3 12.500H20" s="#555" strokeDasharray="1 2" /><P d="M11.500 12.500H20.500V21.500H11.500Z" s="#3a78b8" w={1.500} /></g>
  ),
  borderStyle: (
    <g><P d="M1.500 22V1.500H22" s="#24507e" w={3} opacity=".85" /><P d="M8.500 21V8.500H22" s="#000" strokeDasharray="3 2" w={1.300} /><P d="M15.500 21V14.500H21" s="#000" w={1.500} /></g>
  ),
  borderColor: (
    <g><R x={3} y={2.500} w={18} h={12} f="#f4f4f3" s="#222" strokeWidth="3" /><P d="M4 3.500H20" s="#777" /><R x={0} y={18} w={24} h={6} f="#000080" /></g>
  ),
  money: (
    <g><R x={3.500} y={4.500} w={20} h={10} f="#8cc878" s="#4e8a3a" /><R x={0.500} y={5.500} w={21} h={10} f="#a8dc90" s="#4e8a3a" /><circle cx="11" cy="10.500" r="3" fill="#5a9a48" /><circle cx="16" cy="14.500" r="3.500" fill="#f0dc70" stroke="#b09020" /><circle cx="12" cy="18.500" r="3.500" fill="#f0dc70" stroke="#b09020" /></g>
  ),
  percent: <T x={13} y={21.500} size={26} f="#3f4240" family="Open Sans">%</T>,
  decimal: <T y={17.500} size={16} fontWeight="bold" f="#333" family="Noto Sans" textLength="23">0.0</T>,
  numFmt: (
    <g><R x={2.500} y={3.500} w={19} h={18} f="#e9e9e8" s="#555" /><R x={2} y={2.500} w={20} h={5} f="#3465a4" /><T y={18} size={9} fontWeight="bold" f="#333" family="DejaVu Sans">#.#</T></g>
  ),
  caption: (
    <g><R x={3} y={1.500} w={17} h={13} f="#fff" s="#777" /><P d="M2.500 5V1.500H6M17.500 1.500H20.500V5M2.500 11V14.500H6M17.500 14.500H20.500V11" s="#000" /><T x={13} y={22.500} size={7.500} fontWeight="bold" f="#222" family="DejaVu Sans">ABC</T><path d="M1 16.500L4.500 19.500L1 22.500Z" fill="#24507e" /></g>
  ),
  sort: (
    <g opacity=".5"><circle cx="3" cy="3" r="1.500" stroke="#aaa" /><circle cx="3" cy="9" r="1.500" stroke="#aaa" /><circle cx="3" cy="15" r="1.500" stroke="#aaa" /><circle cx="3" cy="21" r="1.500" stroke="#aaa" /><BigArrow t="translate(27 1) rotate(90)" /></g>
  ),
  protect: (
    <g><Grid x={0.500} y={2.500} w={20} h={19} cols={4} rows={5} /><R x={0.500} y={1.500} w={20} h={3} f="#888a85" /><P d="M13 14V10Q13 7.500 16 7.500Q19.500 7.500 19.500 10V14" s="#999" w={2} /><R x={9.500} y={14.500} w={13} h={8} f="url(#gold)" s="#a88a00" /></g>
  ),
  unprotect: (
    <g opacity=".4"><Grid x={0.500} y={2.500} w={20} h={19} cols={4} rows={5} /><P d="M9 22L22 8" s="#888" w={4} /></g>
  ),
  sum: <T y={21.500} size={27} f="#555955" stroke="#2e3436" strokeWidth=".8" fontWeight="bold">Σ</T>,
  formula: (
    <g><T x={11} y={19} size={19} fontStyle="italic" fontWeight="bold" f="#a468ae" stroke="#6a3a78" strokeWidth=".6">fx</T><Star x={12} y={3} k={0.450} f="#ffe94a" c="#c4a000" /><Star x={20} y={4} k={0.650} f="#ffe94a" c="#c4a000" /><Star x={3} y={7} k={0.350} f="#ffe94a" c="#c4a000" /></g>
  ),
  tableProps: (
    <g>
      <Grid x={1.500} y={4.500} w={21} h={16} />
      <R x={1.500} y={3.500} w={21} h={4} f="#888a85" s="#666" />
      <P d="M16 15L23 22" s="#777" w={4.500} />
      <P d="M16 15L23 22" s="#c4c4c1" w={2.800} />
      <path d="M11 7.500L14.500 11L17.500 10L18.500 7Q21.500 10.500 19.500 14.500L17 17L13.500 16Q9 13 11 7.500Z" fill="#d4d4d1" stroke="#777" />
    </g>
  ),
};

/* Toolbar entries: an icon name, "|" separator ("|1", "|2" with extra lead), "v" arrow, "w" wider arrow, "V" disabled arrow */
const Tools = ({ items }) =>
  items.map((it, i) => {
    if (it === "v" || it === "V" || it === "w") return <Arrow key={i} $off={it === "V"} $wide={it === "w"} />;
    if (it[0] === "|") return <Sep key={i} $x={Number(it[1] || 0)} />;
    if (it === "bullets")
      return (
        <SplitPressed key={i}>
          <Tool><Icon>{I.bullets}</Icon></Tool>
          <Arrow />
        </SplitPressed>
      );
    const on = it[0] === "!";
    const name = on ? it.slice(1) : it;
    const [base, arg] = name.split(":");
    return (
      <Tool key={i} $on={on}>
        <Icon>{arg ? I[base](arg) : I[base]}</Icon>
      </Tool>
    );
  });

const standardBar = [
  "newDoc", "v", "open", "v", "save", "v", "|2", "pdf", "print", "preview", "|", "cut", "copy", "paste", "v", "|",
  "brush", "|", "undo", "v", "redo", "V", "|2", "find", "abc", "pilcrow", "|", "table", "w", "image", "chart", "textbox", "|",
  "pageBreak", "field", "w", "omega", "|1", "link", "footnote", "endnote", "bookmark", "crossRef", "|", "comment", "track", "|",
  "line", "diamond", "v", "drawFn",
];
const formatBar = [
  "|1", "bold", "italic", "underline", "strike", "|", "sup", "sub", "|", "clear", "|", "fontColor", "v", "highlight", "v", "|1",
  "bullets", "numbers", "v", "|2", "!left", "center", "right", "justify", "|", "spacing", "v", "paraInc", "paraDec", "|2",
  "indent", "outdent",
];
const outlineBar = [
  "promote", "demote", "promoteSub", "demoteSub", "|", "down", "up", "downSub", "upSub", "|", "hashList", "hashInsert", "|", "bulletDlg",
];
const tableBar = [
  "rowAbove", "rowBelow", "colBefore", "colAfter", "|", "rowDel", "colDel", "tableDel", "|", "cellSel", "tableSel", "|",
  "merge", "splitCol", "splitRow", "|", "optimize", "v", "|1", "!frame:top", "frame:mid", "frame:bot", "|", "fill", "v",
  "autoFmt", "|", "borders", "w", "borderStyle", "w", "borderColor", "v", "|1", "money", "percent", "decimal", "numFmt", "|",
  "caption", "sort", "|", "protect", "unprotect", "|", "sum", "formula", "|", "tableProps",
];

/* ---------- dock icons ---------- */

const DockIcon = ({ children }) => <Icon size={48} box={48}>{children}</Icon>;

const dock = [
  { icon: (<g><circle cx="24" cy="24" r="21.500" fill="url(#fox)" /><circle cx="25" cy="22" r="11" fill="#3a3f9c" /><path d="M10 14Q12 24 20 25Q24 28 30 23Q28 34 18 30Q8 26 10 14Z" fill="#f07a20" /><path d="M5 30Q14 44 30 38Q40 33 42 22Q46 34 36 42Q24 49 12 42Q6 37 5 30Z" fill="#ff9022" opacity=".6" /></g>) },
  { icon: (<g><path d="M9 8Q17 0 28 2Q44 4 47 20Q49 34 36 46L30 43L24 47L12 40L0 28Q1 22 6 17Z" fill="url(#bird)" /><path d="M12 8Q14 1 22 0L20 6Z" fill="#2aa0e0" /><path d="M2 22L12 15L34 20L36 42L28 38L20 41L6 37Z" fill="#f6f6f8" /><path d="M10 16L17 28L33 21M4 36L15 29M20 29L33 38" stroke="#b4b8c4" strokeWidth="1.200" fill="none" /><path d="M5 36Q8 44 14 45L12 39Z" fill="#2c1f7a" /><path d="M24 40L30 47L32 40L38 44Q44 36 46 28L36 20L37 38Z" fill="#2360b8" /><circle cx="13" cy="13" r="2" fill="#123" /></g>) },
  { icon: (<g><R x={3} y={2} w={42} h={43} rx="2" f="#8f8f8d" /><R x={3} y={2} w={42} h={9} rx="2" f="#cfcfcd" /><R x={6} y={9} w={36} h={12} f="#2a2320" /><R x={8} y={11} w={31} h={8} f="#c7461a" /><R x={8} y={14} w={32} h={3} f="#ffe8da" /><R x={7} y={16} w={34} h={6} f="#f08a44" /><R x={4.500} y={19.500} w={39} h={24} f="url(#cabinet)" s="#c4c4c2" /><R x={17} y={27} w={14} h={11} rx="3" f="#b4b4b2" s="#e8e8e6" /><R x={20} y={30} w={9} h={5} f="#eee" s="#555" /></g>) },
  { icon: (<g><P d="M5 10Q-3 24 5 36M43 10Q51 24 43 36M8 8Q1 24 8 38M40 8Q47 24 40 38" s="#57587a" w={1.500} /><R x={9.500} y={3.500} w={29} h={41} rx="6" f="#dededc" s="#fafafa" /><circle cx="24" cy="22" r="10" fill="#444" /><circle cx="24" cy="22" r="8" fill="#d9b61a" /><circle cx="24" cy="22" r="3" fill="#333" /><circle cx="24" cy="22" r="1.300" fill="#ccc" /><circle cx="30" cy="37" r="3.500" fill="#fff" stroke="#bbb" /></g>) },
  { active: true, dots: 2, icon: (<g><path d="M6 0H27L44 17V46Q44 48 42 48H6Q4 48 4 46V2Q4 0 6 0Z" fill="#0c4f7e" /><path d="M7 3H25L41 19V45H7Z" fill="#fff" /><path d="M9 5H24L39 20V43H9Z" fill="#ecebec" /><path d="M31 0H42Q44 0 44 2V13Z" fill="#0b6cab" /><P d="M12 19H20M12 23H20M12 27H20M12 31H36M12 35H36M12 39H30" s="#0f5077" w={2} /><R x={23} y={19} w={12} h={9} f="#8ec4ea" s="#0f5077" strokeWidth="2" /><path d="M24 27L28 22L31 25L34 23V27Z" fill="#333" /></g>) },
  { icon: (<g><R x={3} y={9} w={42} h={35} f="url(#bag)" /><path d="M3 9L6 5H42L45 9Z" fill="#c44a18" /><P d="M18 14V5Q18 1 22 1H26Q30 1 30 5V14" s="#e8602c" w={3} /><P d="M17.500 36L23 20.500H25L30.500 36" s="#fff" w={4.500} /><R x={14.500} y={28} w={19} h={4.500} rx="2" f="#fff" /><R x={16} y={29.500} w={11} h={1.500} f="#ee7135" /></g>) },
  { icon: (<g><circle cx="24" cy="25" r="19.500" fill="url(#help)" stroke="#4f82bb" /><T x={24} y={37.500} size={35} f="#fff" stroke="#fff" strokeWidth=".6">?</T></g>) },
  { icon: (<g><R x={4.500} y={2.500} w={40} h={42} rx="5" f="#f4f4f4" s="#ddd" /><P d="M8 31Q27 27 29 13Q28 5 20 7Q11 11 13 18Q17 26 44 28M17 9Q28 27 43 33" s="#dc3240" w={2} /><path d="M34 27L44 20V34Z" fill="#e88a90" /><P d="M10 36H38M10 38.500H38M10 41H28" s="#bbb" /></g>) },
  { dots: 1, icon: (<g><R x={0} y={0} w={48} h={48} rx="3" f="#474747" /><path d="M12 17L36 8V17L24 21.500L36 25V32L12 40V31L23 27L12 23.500Z" fill="#ff9820" /><path d="M12 24L24 21.500L36 25V32L23 27Z" fill="#e5800c" opacity=".6" /></g>) },
  { dots: 1, icon: (<g><circle cx="24" cy="24" r="22" fill="#db4437" /><path d="M24 24L5 13A22 22 0 0 0 23 46L33.500 29Z" fill="#0f9d58" /><path d="M24 14H43.600A22 22 0 0 1 23 46L33 29Z" fill="#ffcd40" /><circle cx="24" cy="24" r="10" fill="#f4f4f4" /><circle cx="24" cy="24" r="8" fill="#4285f4" /></g>) },
  { dots: 1, icon: (<g><circle cx="24" cy="24" r="18.500" stroke="#e4e4e2" strokeWidth="6" strokeDasharray="8 6.530" /><circle cx="24" cy="24" r="13" fill="#4a3a3c" stroke="#e0e0de" strokeWidth="8" /><circle cx="24" cy="24" r="9" fill="#6e6466" /><P d="M7 42L27 22" s="#7c1418" w={9} strokeLinecap="round" /><P d="M7 42L27 22" s="#d33" w={6.500} strokeLinecap="round" /><P d="M26 23L33 16" s="#dcdcda" w={5} /><path d="M30 19Q27 10 33 5Q36 3 39 4L35 9L39 14L45 10Q46 16 42 19Q37 22 32 20Z" fill="#e9e9e7" stroke="#888" /></g>) },
  { icon: (<g>{[12, 24, 36].map((x) => [12, 24, 36].map((y) => <circle key={x + "-" + y} cx={x} cy={y} r="3.200" fill="#f2f1f0" />))}</g>) },
];

/* ---------- ruler ---------- */

const Ruler = () => {
  const ticks = [];
  for (let x = 229; x < 1018; x++) {
    const off = x - 595;
    if (off % 12 === 0 && off !== 0 && off % 96 !== 0) {
      const half = off % 48 === 0;
      ticks.push(<R key={x} x={x} y={half ? 7 : 9} w={1} h={half ? 7 : 3} f="#a3a19e" />);
    }
  }
  const nums = [[307, 3], [403, 2], [499, 1], [691, 1], [787, 2], [883, 3], [979, 4]];
  const stops = [691, 738, 785, 833, 880, 928];
  return (
    <svg width="1245" height="24" viewBox="0 0 1245 24">
      <path d="M9 9V14.500H15" stroke="#8d8b88" strokeWidth="2" fill="none" />
      <R x={302} y={4} w={643} h={15} f="#fff" />
      <R x={225.500} y={4.500} w={76} h={14} f="#f2f1f0" s="#b3b1ae" />
      <R x={944.500} y={4.500} w={74} h={14} f="#f2f1f0" s="#b3b1ae" />
      {ticks}
      <P d="M594.500 4V19M596.500 4V19" s="#a3a19e" />
      {nums.map(([x, n]) => (
        <g key={x}>
          <text x={x} y={15} fontSize="10" fill="#a3a09d" textAnchor="middle" fontFamily="Noto Sans">{n}</text>
          <R x={x} y={4} w={1} h={1} f="#a3a19e" /><R x={x} y={17} w={1} h={1.500} f="#a3a19e" />
        </g>
      ))}
      {stops.map((x) => <P key={x} d={`M${x - 2} 18.500H${x + 3}M${x + 0.5} 16V18`} s="#8d8b88" />)}
      <P d="M615.500 3.500H623.500V7L619.500 11L615.500 7Z" s="#8d8b88" f="#f2f1f0" />
      <P d="M639.500 20.500V17L643.500 12.500L647.500 17V20.500Z" s="#8d8b88" f="#f2f1f0" />
      <P d="M940.500 20.500V17L944.500 12.500L948.500 17V20.500Z" s="#8d8b88" f="#f2f1f0" />
    </svg>
  );
};

/* Words wrapped in [brackets] are flagged by the spell checker */
const spell = (text) =>
  text.split(/(\[[^\]]*\])/).map((part, i) =>
    part[0] === "[" ? <Misspelt key={i}>{part.slice(1, -1)}</Misspelt> : part
  );

const menus = [
  ["File", 36], ["Edit", 39], ["View", 45], ["Insert", 51], ["Format", 62], ["Styles", 52],
  ["Table", 48], ["Form", 48], ["Tools", 48], ["Window", 67], ["Help", 40],
];

export default function App() {
  return (
    <Screen>
      <GlobalStyle />
      <Defs />
      <TopBar>
        <TopLeft>
          <TopLabel $w={88}>Activities</TopLabel>
          <Icon size={16}><SmallWriterGlyph /></Icon>
          <TopLabel $w={142} $pl={6}>LibreOffice Writer</TopLabel>
          <svg width="10" height="6"><path d="M0 0H10L5 5Z" fill="#cfccc5" /></svg>
        </TopLeft>
        <Clock><TopLabel $w={67}>Kan 09:04</TopLabel><Dot /></Clock>
        <TopRight>
          <svg width="17" height="18"><R x={0} y={12} w={5} h={5} f="#77746d" /><R x={11} y={12} w={5} h={5} f="#77746d" /><R x={6} y={1} w={5} h={3} f="#6a675f" /><text x="8.500" y="15" fontSize="12" fontWeight="bold" fontFamily="Noto Sans" fill="#dfdbd2" textAnchor="middle">?</text></svg>
          <svg width="17" height="16" fill="none"><path d="M0 5H3L8 1V15L3 11H0Z" fill="#dfdbd2" /><P d="M9.500 5Q11.500 8 9.500 11M11.500 3Q14.500 8 11.500 13M13.500 1.500Q17.500 8 13.500 14.500" s="#dfdbd2" w={1.300} /></svg>
          <svg width="15" height="17" fill="none"><P d="M11.500 6V2.500H9V1H4V2.500H1.500V15H6" s="#dfdbd2" w={2} /><P d="M4 7.500H9M4 10.500H7" s="#dfdbd2" w={1.500} /><path d="M12 7L6.500 12H9.500L8 16.500L14.500 11H11Z" fill="#dfdbd2" /></svg>
          <svg width="10" height="6"><path d="M0 0H10L5 5Z" fill="#cfccc5" /></svg>
        </TopRight>
      </TopBar>
      <Desktop>
        <Dock>
          <DockList>
            {dock.map((d, i) => (
              <DockItem key={i} $active={d.active}>
                <DockIcon>{d.icon}</DockIcon>
                {d.dots && <RunDots>{Array.from({ length: d.dots }, (_, k) => <i key={k} />)}</RunDots>}
              </DockItem>
            ))}
          </DockList>
        </Dock>
        <Window>
          <TitleBar>
            <Title>Discipline-report.odt - LibreOffice Writer</Title>
            <WinButtons>
              {["M4.500 8.500H12.500", "M4.500 5.500H11.500V10.500H4.500Z", "M5.500 5.500L10.500 10.500M10.500 5.500L5.500 10.500"].map((d, i) => (
                <svg key={d} width="16" height="16">
                  <circle cx="8" cy="8" r="7.800" fill={i === 2 ? "#ef6a3f" : "#85827b"} stroke="#34332f" strokeWidth=".6" />
                  <P d={d} s="#34332f" w={1.200} />
                </svg>
              ))}
            </WinButtons>
          </TitleBar>
          <MenuBar>{menus.map(([m, w]) => <MenuItem key={m} $w={w}>{m}</MenuItem>)}</MenuBar>
          <ToolBar $pb={2}><Handle $gap={5} /><Tools items={standardBar} /></ToolBar>
          <ToolBar>
            <Handle $gap={7} />
            <Combo $w={140}><ComboText $ls={0.2}>Table Contents</ComboText><ComboButton /></Combo>
            <Tools items={["styleUpdate", "styleNew", "|1"]} />
            <Combo $w={140} $ml={1}><ComboText $italic>Garamond</ComboText><ComboButton /></Combo>
            <Combo $w={69} $ml={10}><ComboText>12</ComboText><ComboButton /></Combo>
            <Tools items={formatBar} />
          </ToolBar>
          <WorkArea>
            <EditColumn>
              <RulerRow><Ruler /></RulerRow>
              <Canvas>
                <Page>
                  <Line $indent={49} $mt={-5.4}>{spell("[kubibashishikariza]")}</Line>
                  <ListLine><Marker $w={24}>7.</Marker><span>{spell("[Gutanga] [ibihano] mu [bufatanye] [n’Akanama] [nkemurampaka] [ku]")}</span></ListLine>
                  <Line $indent={49}>{spell("[banyamuryango] [bagaragaweho] [imyitwarire] [idahwitse.]")}</Line>
                  <Line $mt={18.6} $indent={1}>{spell("[Incamake] [y’ibikorwa] [byakozwe]:")}</Line>
                  <Table>
                    <Cell $head>{spell("[Inshingano]")}</Cell>
                    <Cell $head>{spell("[Ibyakozwe]")}</Cell>
                    <Cell $pt={4}>{spell("[Kwakira] [abanyamurango] [bashya]")}</Cell>
                    <Cell $pt={4}>
                      <BulletList>
                        <Bullet>•</Bullet>
                        <div>
                          <Line>{spell("Mu [nama] [rusange] [yabaye] [tariki] ya")}</Line>
                          <Line>{spell("23/03/2019, [twakiriye]")}</Line>
                          <Line>{spell("[umunyamuryango] [mushya]")}</Line>
                          <Line>{spell("“[membre] Adherent” [witwa] [KIREZI]")}</Line>
                          <Line>{spell("[Delphine] [ahabwa] Unite")}</Line>
                          <Line>{spell("[y’INTARAMANAGUHIGA]")}</Line>
                        </div>
                      </BulletList>
                      <BulletList>
                        <Bullet>•</Bullet>
                        <div>
                          <Line>{spell("[Abanyeshuri] [barangije] [muri] [AERG]")}</Line>
                          <Line>St Andre promotion 200</Line>
                          <Line>{spell("[bamenyeshejwe] [umuryango]")}</Line>
                          <Line>{spell("[DUKUNDANE] Family")}</Line>
                        </div>
                      </BulletList>
                    </Cell>
                    <Cell />
                    <Cell>0783076800</Cell>
                  </Table>
                </Page>
              </Canvas>
            </EditColumn>
            <ScrollGutter><ScrollThumb /></ScrollGutter>
            <Splitter><Collapser /></Splitter>
            <SideBar>
              <SideItem $h={24}><Icon size={12} box={12}><P d="M2 1.500H8M2 4H8M2 6.500H8" s="#2a3a58" w={1.300} /><path d="M5.500 7.500H11L8.300 10.500Z" fill="#1a2438" /></Icon></SideItem>
              <SideRule />
              <SideItem $on $h={32}><Icon><Wrench s="#8a8a88" f="#f4f4f3" t="translate(1 1)" /></Icon></SideItem>
              <SideItem $h={37}><Icon><P d="M3.500 1.500H15L20.500 7V22.500H3.500Z" s="#999b97" f="url(#paper)" /><P d="M15 1.500V7H20.500" s="#999b97" f="#fff" /></Icon></SideItem>
              <SideItem $h={36}><Icon><P d="M4 5V2.500H21V5M12.500 2.500V21" s="#4c4f4e" w={3.500} /><P d="M1 7V22.500H21.500Z" s="#3f8a10" f="#8bd05a" /><P d="M4.500 14V19.500H12Z" s="#3f8a10" f="#dff5cc" /></Icon></SideItem>
              <SideItem $h={33}><Icon><P d="M9 4L12 1L15 4" s="#777" w={1.500} /><R x={1.500} y={4.500} w={21} h={15} rx="1.500" f="#c8882a" s="#7a4a08" /><R x={4.500} y={7.500} w={15} h={9} f="#f0b048" s="#5b7fae" /><P d="M14 16V12L11.500 9.500M14 12L17.500 9.500" s="#5a3a10" w={0.900} /></Icon></SideItem>
              <SideItem $h={36}><Icon><circle cx="12" cy="12" r="10" fill="#f6f6f5" stroke="#8a8c88" strokeWidth="2.500" /><P d="M12 5V19M5 12H19" s="#d5d5d3" /><path d="M7 7L14 10.500L11 13.500Z" fill="#d8343c" /><path d="M17 17L14 10.500L11 13.500Z" fill="#4a78b8" /></Icon></SideItem>
            </SideBar>
          </WorkArea>
          <ToolBar><Handle $gap={6} /><Tools items={outlineBar} /></ToolBar>
          <ToolBar $pb={2}><Handle $gap={6} /><Tools items={tableBar} /></ToolBar>
          <StatusBar>
            <Status $w={135} $pl={10}>Page 1 of 1</Status>
            <Status $w={260} $pl={8}>125 words, 1,048 characters</Status>
            <Status $w={151} $pl={8}>Default Style</Status>
            <Status $w={151} $center $pl={2}>English (USA)</Status>
            <Status $w={68} />
            <Status $w={29} $center $pl={2}><svg width="14" height="12"><R x={0} y={2} w={9} h={6} f="#8d8b88" /><P d="M10 .5H13M11.500 0V11M10 10.500H13" s="#8d8b88" /></svg></Status>
            <Status $w={29} $center $pl={4}><svg width="14" height="14"><P d="M8 1.500H.5V11.500H8.500V9" s="#8d8b88" /><P d="M8.500 3V9M6 4.500L11 7.500M11 4.500L6 7.500" s="#b02030" w={1.200} /></svg></Status>
            <Status $w={29} />
            <Status $w={180} $center $pl={3}>Table1:B2 : Level 1</Status>
            <Status $w={76} $center $pl={3}>
              <svg width="56" height="12" fill="none">
                <P d="M1.500 1.500H6L8.500 4V10.500H1.500ZM6 1.500V4.500H8.500" s="#4c4c4c" w={1.300} />
                <P d="M15.500 1.500H20L22.500 4V10.500H15.500ZM25.500 1.500H30L32.500 4V10.500H25.500ZM20 1.500V4.500H22M30 1.500V4.500H32" s="#8d8b88" />
                <P d="M47.500 10.500V1.500H43L39.500 4V10.500ZM47.500 1.500H51L54.500 4V10.500H47.500M43 1.500V4.500H40M51 1.500V4.500H54" s="#8d8b88" />
              </svg>
            </Status>
            <Status $w={143} $pl={9}>
              <svg width="128" height="14">
                <P d="M0 7H9M118 7H127M122.500 2.500V11.500" s="#8d8b88" w={2} />
                <P d="M15 7H112M28 2V12" s="#b1afac" w={2} />
                <circle cx="63" cy="7" r="3.500" fill="#fff" stroke="#8d8b88" />
              </svg>
            </Status>
            <Status $w={48} $pl={8} $last>100%</Status>
          </StatusBar>
        </Window>
      </Desktop>
    </Screen>
  );
}
